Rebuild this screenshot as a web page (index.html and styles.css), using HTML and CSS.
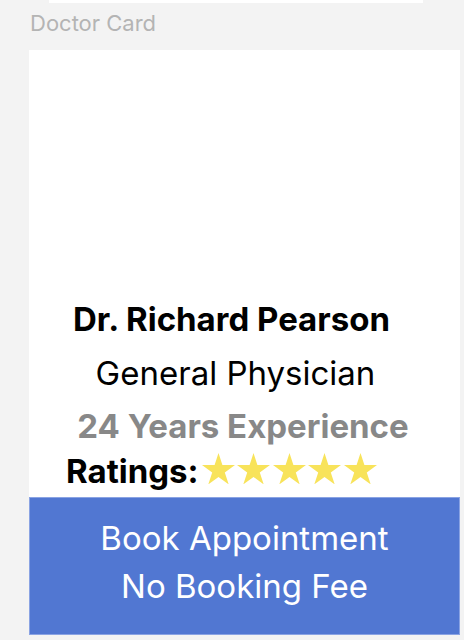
FILE: index.html
```html
<!DOCTYPE html>
<html>
<head>
<meta charset="utf-8">
<link rel="stylesheet" href="styles.css">
</head>
<body>
<div class="strip"></div>
<div class="label">Doctor Card</div>
<div class="card">
  <div class="photo"></div>
  <div class="info">
    <div class="name">Dr. Richard Pearson</div>
    <div class="spec">General Physician</div>
    <div class="exp">24 Years Experience</div>
    <div class="rating">
      <span class="rating-label">Ratings:</span>
      <span class="stars" aria-label="5 stars">
        <svg class="star" viewBox="0 0 24 22.83"><polygon points="12,0 14.83,8.72 24,8.72 16.58,14.11 19.42,22.83 12,17.44 4.58,22.83 7.42,14.11 0,8.72 9.17,8.72"/></svg>
        <svg class="star" viewBox="0 0 24 22.83"><polygon points="12,0 14.83,8.72 24,8.72 16.58,14.11 19.42,22.83 12,17.44 4.58,22.83 7.42,14.11 0,8.72 9.17,8.72"/></svg>
        <svg class="star" viewBox="0 0 24 22.83"><polygon points="12,0 14.83,8.72 24,8.72 16.58,14.11 19.42,22.83 12,17.44 4.58,22.83 7.42,14.11 0,8.72 9.17,8.72"/></svg>
        <svg class="star" viewBox="0 0 24 22.83"><polygon points="12,0 14.83,8.72 24,8.72 16.58,14.11 19.42,22.83 12,17.44 4.58,22.83 7.42,14.11 0,8.72 9.17,8.72"/></svg>
        <svg class="star" viewBox="0 0 24 22.83"><polygon points="12,0 14.83,8.72 24,8.72 16.58,14.11 19.42,22.83 12,17.44 4.58,22.83 7.42,14.11 0,8.72 9.17,8.72"/></svg>
      </span>
    </div>
  </div>
  <div class="book">
    <div>Book Appointment</div>
    <div>No Booking Fee</div>
  </div>
</div>
</body>
</html>
```
FILE: styles.css
```css
html, body {
  margin: 0;
  padding: 0;
  background: #f3f3f3;
  font-family: Inter, "Noto Sans", sans-serif;
}
.strip {
  margin-left: 49px;
  width: 374px;
  height: 3px;
  background: #ffffff;
}
.label {
  margin: 7px 0 0 30px;
  font-size: 22px;
  line-height: 26px;
  color: #b4b4b4;
}
.card {
  margin: 14px 0 0 29px;
  width: 431px;
  background: #ffffff;
  display: flex;
  flex-direction: column;
}
.photo {
  height: 242px;
}
.info {
  display: flex;
  flex-direction: column;
  text-align: center;
  font-size: 33px;
}
.name {
  font-weight: 700;
  line-height: 54px;
  color: #000;
  padding-right: 26px;
}
.spec {
  line-height: 54px;
  color: #000;
  padding-right: 18px;
}
.exp {
  font-weight: 700;
  line-height: 53px;
  color: #888888;
  padding-right: 3px;
}
.rating {
  display: flex;
  align-items: flex-start;
  height: 44px;
  padding-left: 37px;
  text-align: left;
}
.rating-label {
  font-weight: 700;
  line-height: 36px;
  color: #000;
}
.stars {
  display: flex;
  gap: 2.5px;
  margin-left: 3px;
  padding-top: -1px;
}
.star {
  width: 33px;
  height: 31.4px;
  fill: #f8e35a;
  display: block;
}
.book {
  height: 138px;
  box-sizing: border-box;
  padding-top: 17px;
  background: #5177d2;
  color: #ffffff;
  font-size: 33px;
  line-height: 48px;
  text-align: center;
  display: flex;
  flex-direction: column;
  box-shadow: inset 0 0 0 1px #8aa3e3;
}
```
